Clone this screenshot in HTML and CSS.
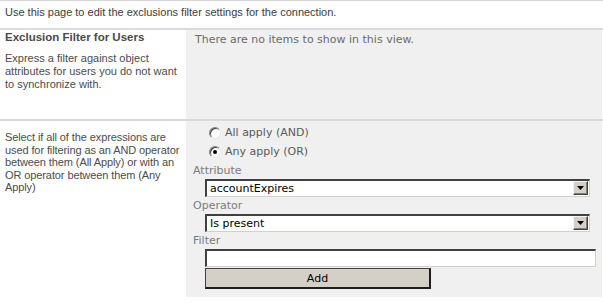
FILE: index.html
```html
<!DOCTYPE html>
<html>
<head>
<meta charset="utf-8">
<link rel="stylesheet" href="styles.css">
</head>
<body>
<div class="page">
  <div class="intro">Use this page to edit the exclusions filter settings for the connection.</div>
  <div class="section first">
    <div class="desc">
      <div class="desc-title">Exclusion Filter for Users</div>
      <div class="desc-text">Express a filter against object attributes for users you do not want to synchronize with.</div>
    </div>
    <div class="panel">
      <div class="empty">There are no items to show in this view.</div>
    </div>
  </div>
  <div class="section second">
    <div class="desc">
      <div class="desc-text">Select if all of the expressions are used for filtering as an AND operator between them (All Apply) or with an OR operator between them (Any Apply)</div>
    </div>
    <div class="panel form">
      <label class="radio-row"><input type="radio" name="mode" class="radio"><span>All apply (AND)</span></label>
      <label class="radio-row"><input type="radio" name="mode" class="radio" checked><span>Any apply (OR)</span></label>
      <div class="field-label first-label">Attribute</div>
      <div class="select">
        <span class="select-value">accountExpires</span>
        <span class="arrow"><svg width="7" height="4" viewBox="0 0 7 4"><path d="M0 0H7L3.5 4Z" fill="#000"/></svg></span>
      </div>
      <div class="field-label">Operator</div>
      <div class="select">
        <span class="select-value">Is present</span>
        <span class="arrow"><svg width="7" height="4" viewBox="0 0 7 4"><path d="M0 0H7L3.5 4Z" fill="#000"/></svg></span>
      </div>
      <div class="field-label">Filter</div>
      <input type="text" class="text-input">
      <button class="btn">Add</button>
    </div>
  </div>
</div>
</body>
</html>
```
FILE: styles.css
```css
html, body {
  margin: 0;
  padding: 0;
  background: #fff;
}
.page {
  width: 603px;
  font-family: "Liberation Sans", Arial, sans-serif;
  font-size: 11px;
  color: #4c4c4c;
}
.intro {
  box-sizing: border-box;
  height: 30px;
  border-top: 1px solid #d4d4d4;
  border-bottom: 2px solid #dadada;
  padding: 5px 5px 0;
  line-height: 13px;
  color: #3c3c3c;
}
.section {
  display: flex;
}
.section.first {
  height: 89px;
  border-bottom: 2px solid #dadada;
}
.section.second {
  height: 176px;
}
.desc {
  box-sizing: border-box;
  width: 186px;
  padding: 1px 0 0 5px;
  line-height: 13px;
}
.desc-title {
  font-weight: bold;
  font-size: 11.5px;
  color: #4a4a4a;
}
.desc-text {
  margin-top: 8px;
  color: #4c4c4c;
}
.second .desc {
  padding-top: 10px;
}
.second .desc-text {
  margin-top: 0;
  line-height: 12.5px;
  letter-spacing: -0.1px;
}
.panel {
  flex: 1;
  margin-right: 1px;
  background: #f0f0f0;
  font-family: "DejaVu Sans", Verdana, sans-serif;
  font-size: 11px;
}
.empty {
  padding: 3px 0 0 9px;
  line-height: 13px;
  color: #6b6b6b;
}
.form {
  box-sizing: border-box;
  padding: 5px 0 0 7px;
  display: flex;
  flex-direction: column;
  align-items: flex-start;
}
.radio-row {
  display: flex;
  align-items: center;
  height: 19px;
  padding-left: 16px;
  color: #5a5a5a;
  margin-top: -3px;
}
.radio-row + .radio-row {
  margin-top: 0;
}
.radio {
  appearance: none;
  -webkit-appearance: none;
  box-sizing: border-box;
  width: 12px;
  height: 12px;
  margin: 0 4px 0 0;
  border-radius: 50%;
  background: #fff;
  border: 1px solid;
  border-color: #808080 #e8e8e8 #e8e8e8 #808080;
  box-shadow: inset 1px 1px 0 #404040;
  position: relative;
}
.radio:checked::after {
  content: "";
  position: absolute;
  left: 3px;
  top: 3px;
  width: 4px;
  height: 4px;
  border-radius: 50%;
  background: #000;
}
.field-label {
  color: #7c7c7c;
  line-height: 17px;
  height: 17px;
}
.first-label {
  margin-top: 1px;
}
.select {
  box-sizing: border-box;
  width: 385px;
  height: 18px;
  margin: 0 0 0 12px;
  background: #fff;
  border-style: solid;
  border-width: 2px 1px 1px 2px;
  border-color: #404040 #d4d0c8 #d4d0c8 #404040;
  display: flex;
  align-items: center;
  position: relative;
  color: #000;
}
.select-value {
  padding-left: 3px;
  line-height: 13px;
}
.arrow {
  position: absolute;
  right: 1px;
  top: 0px;
  box-sizing: border-box;
  width: 15px;
  height: 14px;
  background: #d4d0c8;
  border-style: solid;
  border-width: 1px;
  border-color: #f4f4f4 #404040 #404040 #f4f4f4;
  box-shadow: inset -1px -1px 0 #808080;
  display: flex;
  align-items: center;
  justify-content: center;
}
.text-input {
  box-sizing: border-box;
  width: 391px;
  height: 18px;
  margin: 0 0 0 12px;
  background: #fff;
  border-style: solid;
  border-width: 2px 1px 1px 2px;
  border-color: #404040 #d4d0c8 #d4d0c8 #404040;
  padding: 0;
  outline: none;
}
.btn {
  box-sizing: border-box;
  width: 226px;
  height: 21px;
  margin: 1px 0 0 12px;
  background: #d4d0c8;
  border-style: solid;
  border-width: 1px 2px 2px 1px;
  border-color: #404040 #1e1e1e #1e1e1e #404040;
  font-family: "DejaVu Sans", Verdana, sans-serif;
  font-size: 11px;
  color: #000;
  padding: 0;
}
```
